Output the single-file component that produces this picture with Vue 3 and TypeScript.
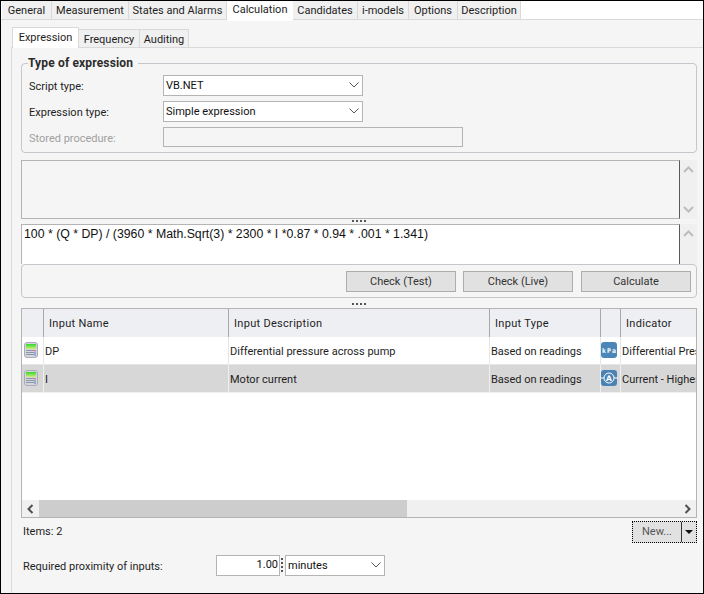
<script setup lang="ts">
interface Row { name: string; description: string; type: string; unit: string; indicator: string; selected: boolean }
const topTabs: { label: string; width: number; active?: boolean }[] = [
  { label: 'General', width: 50 },
  { label: 'Measurement', width: 77 },
  { label: 'States and Alarms', width: 98 },
  { label: 'Calculation', width: 66, active: true },
  { label: 'Candidates', width: 65 },
  { label: 'i-models', width: 51 },
  { label: 'Options', width: 49 },
  { label: 'Description', width: 63 },
]
const subTabs: { label: string; width: number; active?: boolean }[] = [
  { label: 'Expression', width: 67, active: true },
  { label: 'Frequency', width: 61 },
  { label: 'Auditing', width: 49 },
]
const rows: Row[] = [
  { name: 'DP', description: 'Differential pressure across pump', type: 'Based on readings', unit: 'kPa', indicator: 'Differential Pressure', selected: false },
  { name: 'I', description: 'Motor current', type: 'Based on readings', unit: 'A', indicator: 'Current - Highest Phase', selected: true },
]
</script>

<template>
  <div class="app">
    <div class="top-tabs">
      <div v-for="t in topTabs" :key="t.label" class="top-tab" :class="{ active: t.active }" :style="{ width: t.width + 'px' }">{{ t.label }}</div>
    </div>
    <div class="body">
      <div class="sub-tabs">
        <div v-for="t in subTabs" :key="t.label" class="sub-tab" :class="{ active: t.active }" :style="{ width: t.width + 'px' }">{{ t.label }}</div>
      </div>
      <div class="pane">
        <fieldset class="group">
          <legend>Type of expression</legend>
          <div class="form">
            <label>Script type:</label>
            <div class="combo w200"><span>VB.NET</span><svg width="10" height="6" viewBox="0 0 10 6"><path d="M0.5 0.5 5 5 9.5 0.5" fill="none" stroke="#555" /></svg></div>
            <label>Expression type:</label>
            <div class="combo w200"><span>Simple expression</span><svg width="10" height="6" viewBox="0 0 10 6"><path d="M0.5 0.5 5 5 9.5 0.5" fill="none" stroke="#555" /></svg></div>
            <label class="disabled">Stored procedure:</label>
            <div class="disabled-input"></div>
          </div>
        </fieldset>

        <div class="memo message">
          <div class="memo-box"></div>
          <div class="vscroll">
            <svg width="11" height="7" viewBox="0 0 11 7"><path d="M1 6 5.5 1.5 10 6" fill="none" stroke="#bdbdbd" stroke-width="2" /></svg>
            <svg width="11" height="7" viewBox="0 0 11 7"><path d="M1 1 5.5 5.5 10 1" fill="none" stroke="#bdbdbd" stroke-width="2" /></svg>
          </div>
        </div>
        <div class="splitter first"><i></i></div>
        <div class="memo editor">
          <div class="memo-box white">100 * (Q * DP) / (3960 * Math.Sqrt(3) * 2300 * I *0.87 * 0.94 * .001 * 1.341)</div>
          <div class="vscroll">
            <svg width="11" height="7" viewBox="0 0 11 7"><path d="M1 6 5.5 1.5 10 6" fill="none" stroke="#bdbdbd" stroke-width="2" /></svg>
          </div>
        </div>
        <div class="actions">
          <button class="btn">Check (Test)</button>
          <button class="btn">Check (Live)</button>
          <button class="btn">Calculate</button>
        </div>
        <div class="splitter second"><i></i></div>

        <div class="grid">
          <div class="gr head">
            <div class="hc"></div>
            <div class="hc">Input Name</div>
            <div class="hc">Input Description</div>
            <div class="hc">Input Type</div>
            <div class="hc"></div>
            <div class="hc last">Indicator</div>
          </div>
          <div v-for="r in rows" :key="r.name" class="gr row" :class="{ selected: r.selected }">
            <div class="c icon calc">
              <svg width="14" height="16" viewBox="0 0 14 16">
                <defs>
                  <linearGradient id="g" x1="0" y1="0" x2="0" y2="1"><stop offset="0" stop-color="#2fd82f" /><stop offset="1" stop-color="#d4ec7a" /></linearGradient>
                </defs>
                <rect x="0.5" y="0.5" width="13" height="15" rx="2.5" fill="#d3d6de" stroke="#a9adb8" />
                <rect x="2" y="2" width="10" height="5" fill="url(#g)" />
                <path d="M2 8.5h8M2 10.5h8M2 12.5h8" stroke="#8e95a5" />
                <path d="M11 8v1.5" stroke="#e23b3b" /><path d="M11 10v4" stroke="#5b86c8" />
              </svg>
            </div>
            <div class="c">{{ r.name }}</div>
            <div class="c">{{ r.description }}</div>
            <div class="c">{{ r.type }}</div>
            <div class="c icon unit">
              <svg v-if="r.unit === 'kPa'" width="17" height="16" viewBox="0 0 17 16">
                <rect x="0" y="0" width="16" height="16" rx="3" fill="#4a87b8" />
                <text x="8" y="10.5" text-anchor="middle" font-size="6.5" font-family="'DejaVu Sans Mono', 'DejaVu Sans'" font-weight="bold" textLength="14" fill="#fff">kPa</text>
              </svg>
              <svg v-else width="17" height="16" viewBox="0 0 17 16">
                <rect x="0" y="0" width="16" height="16" rx="3" fill="#4a82b4" />
                <circle cx="8" cy="8" r="5" fill="none" stroke="#fff" />
                <path d="M0 8h3M13 8h4" stroke="#fff" />
                <text x="8" y="10.6" text-anchor="middle" font-size="7.5" font-family="'DejaVu Sans'" font-weight="bold" fill="#fff">A</text>
              </svg>
            </div>
            <div class="c last">{{ r.indicator }}</div>
          </div>
          <div class="spacer"></div>
          <div class="hscroll">
            <svg class="arrow" width="7" height="10" viewBox="0 0 7 10"><path d="M5.5 1 1.5 5 5.5 9" fill="none" stroke="#505050" stroke-width="2" /></svg>
            <div class="track"><div class="thumb"></div></div>
            <svg class="arrow" width="7" height="10" viewBox="0 0 7 10"><path d="M1.5 1 5.5 5 1.5 9" fill="none" stroke="#505050" stroke-width="2" /></svg>
          </div>
        </div>

        <div class="footer">
          <span class="items">Items: 2</span>
          <div class="split-btn">
            <div class="split-main">New...</div>
            <div class="split-drop"><svg width="8" height="4" viewBox="0 0 8 4"><path d="M0 0h8L4 4z" fill="#111" /></svg></div>
          </div>
        </div>

        <div class="proximity">
          <label>Required proximity of inputs:</label>
          <div class="number">1.00</div>
          <div class="spin"></div>
          <div class="combo w100"><span>minutes</span><svg width="10" height="6" viewBox="0 0 10 6"><path d="M0.5 0.5 5 5 9.5 0.5" fill="none" stroke="#555" /></svg></div>
        </div>
      </div>
    </div>
  </div>
</template>

<style>
html, body { margin: 0; padding: 0; background: #fff; }
</style>

<style scoped>
.app {
  width: 704px;
  height: 594px;
  box-sizing: border-box;
  border: 1px solid #000;
  display: flex;
  flex-direction: column;
  background: #f5f5f5;
  font-family: Roboto, "Noto Sans", sans-serif;
  font-size: 11px;
  color: #1e1e1e;
  overflow: hidden;
}
.top-tabs {
  height: 19px;
  flex: none;
  box-sizing: border-box;
  display: flex;
  align-items: flex-end;
  padding-left: 1px;
  background: #fff;
  border-bottom: 1px solid #d9d9d9;
}
.top-tab {
  height: 18px;
  box-sizing: border-box;
  background: #f0f0f0;
  border-right: 1px solid #d9d9d9;
  text-align: center;
  line-height: 20px;
  white-space: nowrap;
}
.top-tab.active {
  background: #fff;
  height: 20px;
  margin-bottom: -2px;
  line-height: 18px;
  border-right: 0;
}
.body {
  flex: 1;
  min-height: 0;
  display: flex;
  flex-direction: column;
  padding: 7px 0 0 10px;
}
.sub-tabs {
  height: 21px;
  flex: none;
  box-sizing: border-box;
  display: flex;
  align-items: flex-end;
  border-bottom: 1px solid #d9d9d9;
  padding-left: 1px;
}
.sub-tab {
  height: 18px;
  box-sizing: border-box;
  background: #f0f0f0;
  border: 1px solid #d9d9d9;
  border-left: 0;
  border-bottom: 0;
  text-align: center;
  line-height: 19px;
}
.sub-tab.active {
  height: 21px;
  margin-bottom: -1px;
  background: #fff;
  line-height: 19px;
  border-left: 1px solid #d9d9d9;
}
.pane {
  flex: 1;
  min-height: 0;
  display: flex;
  flex-direction: column;
  border-left: 1px solid #d9d9d9;
  padding: 0 6px 0 9px;
}
.group {
  margin: 7px 0 0;
  padding: 0 7px 0 7px;
  height: 98px;
  box-sizing: border-box;
  border: 1px solid #c4c6cb;
  border-radius: 4px;
  min-width: 0;
}
.group legend {
  font-weight: 700;
  font-size: 12px;
  letter-spacing: 0.15px;
  line-height: 16px;
  padding: 0 5px 0 0;
  margin-left: -1px;
  color: #2c2c2c;
}
.form {
  display: grid;
  grid-template-columns: 134px 1fr;
  grid-template-rows: 21px 21px 20px;
  row-gap: 5px;
  align-items: center;
  justify-items: start;
  margin-top: 4px;
}
.form label { padding-top: 2px; }
.form .disabled { color: #a0a0a0; }
.combo {
  height: 21px;
  box-sizing: border-box;
  background: #fff;
  border: 1px solid #b4b4b4;
  display: flex;
  align-items: center;
  justify-content: space-between;
  padding: 0 3px 1px 2px;
  color: #111;
}
.w200 { width: 200px; }
.w100 { width: 100px; }
.disabled-input {
  width: 300px;
  height: 20px;
  box-sizing: border-box;
  background: #f5f5f5;
  border: 1px solid #b4b4b4;
}
.memo { display: flex; flex: none; }
.message { height: 59px; margin-top: 7px; }
.editor { height: 40px; }
.memo-box {
  flex: 1;
  box-sizing: border-box;
  border: 1px solid #b4b4b4;
  border-right-color: #5a5a5a;
  border-bottom-color: #b4b4b4;
  background: #f5f5f5;
}
.memo-box.white {
  background: #fff;
  border-bottom: 0;
  font-family: "Liberation Sans", Arial, sans-serif;
  font-size: 12.3px;
  line-height: 18px;
  padding-left: 2px;
  color: #111;
  white-space: nowrap;
}
.vscroll {
  width: 17px;
  background: #f0f0f0;
  display: flex;
  flex-direction: column;
  justify-content: space-between;
  align-items: center;
  padding: 6px 0;
  box-sizing: border-box;
}
.splitter {
  display: flex;
  justify-content: center;
  flex: none;
}
.splitter.first { height: 5px; padding-top: 1px; box-sizing: border-box; }
.splitter.second { height: 10px; padding-top: 5px; box-sizing: border-box; }
.splitter i {
  display: block;
  width: 14px;
  height: 2px;
  background: repeating-linear-gradient(90deg, #555 0 2px, transparent 2px 4px);
}
.actions {
  height: 34px;
  flex: none;
  box-sizing: border-box;
  background: #f5f5f5;
  border: 1px solid #c4c6cb;
  border-radius: 4px;
  display: flex;
  justify-content: flex-end;
  align-items: flex-start;
  padding: 6px 5px 0 0;
  gap: 7px;
}
.btn {
  width: 110px;
  height: 21px;
  padding: 0;
  box-sizing: border-box;
  background: #e1e1e1;
  border: 1px solid #adadad;
  font: inherit;
  color: #333;
}
.btn + .btn + .btn { margin-left: 1px; }
.grid {
  height: 210px;
  flex: none;
  box-sizing: border-box;
  border: 1px solid #b4b4b4;
  background: #fff;
  display: flex;
  flex-direction: column;
  overflow: hidden;
}
.gr {
  display: grid;
  grid-template-columns: 22px 185px 261px 111px 20px 180px;
  width: 779px;
  flex: none;
}
.head { height: 28px; background: #eeeff3; }
.hc {
  box-sizing: border-box;
  border-right: 1px solid #a8a8a8;
  padding-left: 5px;
  line-height: 29px;
  letter-spacing: 0.3px;
}
.hc.last { border-right: 0; }
.row { height: 28px; margin-bottom: 0; }
.c {
  box-sizing: border-box;
  border-right: 1px solid #e6e6e6;
  border-bottom: 1px solid #e6e6e6;
  padding-left: 1px;
  line-height: 29px;
  white-space: nowrap;
  overflow: hidden;
  color: #1e1e1e;
}
.c.last { width: 76px; border-right: 0; }
.selected .c { background: #d7d7d7; border-color: #efefef; }
.icon { display: flex; align-items: center; justify-content: flex-start; padding: 0 0 1px; }
.calc { padding-left: 2px; }
.icon svg { flex: none; }
.spacer { flex: 1; }
.hscroll {
  height: 17px;
  flex: none;
  background: #f0f0f0;
  display: flex;
  align-items: center;
}
.arrow { flex: none; margin: 0 5px; }
.track { flex: 1; height: 17px; }
.thumb { width: 368px; height: 17px; background: #cdcdcd; }
.footer {
  flex: none;
  height: 22px;
  margin-top: 3px;
  display: flex;
  align-items: center;
  justify-content: space-between;
  padding-left: 2px;
}
.items { padding-bottom: 2px; }
.split-btn {
  width: 65px;
  height: 22px;
  box-sizing: border-box;
  border: 1px dotted #000;
  display: flex;
  background: #e1e1e1;
  outline: 1px dotted #000;
  outline-offset: -1px;
}
.split-main {
  width: 49px;
  box-sizing: border-box;
  border-right: 1px solid #333;
  text-align: center;
  line-height: 20px;
  color: #555;
}
.split-drop {
  flex: 1;
  display: flex;
  align-items: center;
  justify-content: center;
}
.proximity {
  flex: none;
  height: 21px;
  margin-top: 12px;
  display: flex;
  align-items: center;
  padding-left: 2px;
}
.proximity label { width: 193px; padding-top: 2px; }
.number {
  width: 64px;
  height: 21px;
  box-sizing: border-box;
  background: #fff;
  border: 1px solid #b4b4b4;
  text-align: right;
  line-height: 17px;
  padding-right: 1px;
  color: #111;
}
.spin {
  width: 2px;
  height: 15px;
  margin: 0 2px 0 1px;
  background: repeating-linear-gradient(180deg, #555 0 2px, transparent 2px 4px);
}
</style>
